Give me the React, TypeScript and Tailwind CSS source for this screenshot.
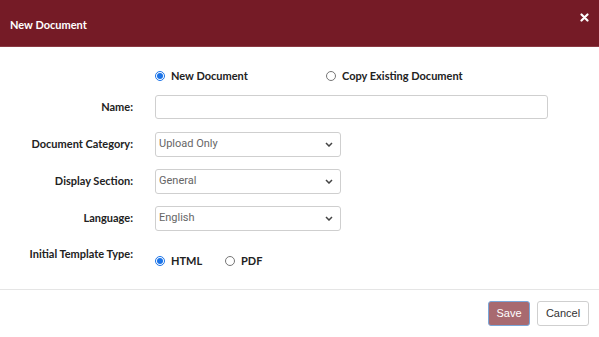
import { ChangeEvent, ReactNode, useState } from 'react'

const labelFont = "font-['Lato','Noto_Sans',sans-serif]"

function Radio({ checked, label, onClick }: { checked: boolean; label: string; onClick: () => void }) {
  return (
    <button type="button" onClick={onClick} className="flex items-center gap-[6px] h-4">
      {checked ? (
        <span className="w-[10px] h-[10px] rounded-full border border-[#1a73e8] bg-white flex items-center justify-center">
          <span className="w-[6px] h-[6px] rounded-full bg-[#1a73e8]" />
        </span>
      ) : (
        <span className="w-[10px] h-[10px] rounded-full border border-[#767676] bg-white" />
      )}
      <span className={`${labelFont} text-[11px] font-bold text-[#222]`}>{label}</span>
    </button>
  )
}

function Select({ value, options, onChange }: { value: string; options: string[]; onChange: (v: string) => void }) {
  return (
    <div className="relative w-[186px] h-[25px]">
      <select
        value={value}
        onChange={(e: ChangeEvent<HTMLSelectElement>) => onChange(e.target.value)}
        className="block appearance-none w-full h-full rounded-[3px] border border-[#cfcfcf] bg-white pl-[3px] pr-6 font-['Roboto',sans-serif] text-[11px] text-[#666] outline-none"
      >
        {options.map(o => <option key={o}>{o}</option>)}
      </select>
      <svg className="pointer-events-none absolute right-[8px] top-[10px]" width="8" height="5" viewBox="0 0 8 5">
        <path d="M1 1l3 3 3-3" fill="none" stroke="#444" strokeWidth="1.5" />
      </svg>
    </div>
  )
}

function Row({ label, children, className = '' }: { label: string; children: ReactNode; className?: string }) {
  return (
    <div className={`flex items-center ${className}`}>
      <div className={`w-[133px] text-right ${labelFont} text-[11px] font-bold text-[#222]`}>{label}</div>
      <div className="ml-[22px] flex">{children}</div>
    </div>
  )
}

export default function App() {
  const [mode, setMode] = useState('new')
  const [name, setName] = useState('')
  const [category, setCategory] = useState('Upload Only')
  const [section, setSection] = useState('General')
  const [language, setLanguage] = useState('English')
  const [template, setTemplate] = useState('html')

  return (
    <div className="w-[599px] h-[337px] bg-white flex flex-col overflow-hidden">
      <div className="h-[47px] bg-[#751b26] border-b border-[#8a3a43] flex items-start justify-between pl-[10px] pr-[10px]">
        <h2 className={`${labelFont} mt-[17px] text-[11px] font-bold text-white`}>New Document</h2>
        <button type="button" className="mt-[12px] w-[10px] h-[10px] flex items-center justify-center">
          <svg width="9" height="9" viewBox="0 0 9 9">
            <path d="M1.5 1.5l6 6M7.5 1.5l-6 6" stroke="white" strokeWidth="2.2" strokeLinecap="round" />
          </svg>
        </button>
      </div>

      <div className="flex-1 flex flex-col">
        <div className="flex items-center ml-[155px] mt-[21px] h-4">
          <div className="w-[171px] flex">
            <Radio checked={mode === 'new'} label="New Document" onClick={() => setMode('new')} />
          </div>
          <Radio checked={mode === 'copy'} label="Copy Existing Document" onClick={() => setMode('copy')} />
        </div>

        <Row label="Name:" className="mt-[11px]">
          <input
            value={name}
            onChange={e => setName(e.target.value)}
            className="block w-[393px] h-[24px] rounded-[3px] border border-[#cfcfcf] bg-white px-[4px] font-['Roboto',sans-serif] text-[11px] outline-none"
          />
        </Row>

        <Row label="Document Category:" className="mt-[13px]">
          <Select value={category} options={['Upload Only', 'Template']} onChange={setCategory} />
        </Row>
        <Row label="Display Section:" className="mt-[12px]">
          <Select value={section} options={['General', 'Other']} onChange={setSection} />
        </Row>
        <Row label="Language:" className="mt-[12px]">
          <Select value={language} options={['English', 'Spanish']} onChange={setLanguage} />
        </Row>

        <div className="flex items-start mt-[15px]">
          <div className={`w-[133px] text-right ${labelFont} text-[11px] font-bold text-[#222] leading-4`}>
            Initial Template Type:
          </div>
          <div className="ml-[22px] mt-[7px] flex items-center">
            <div className="w-[70px] flex">
              <Radio checked={template === 'html'} label="HTML" onClick={() => setTemplate('html')} />
            </div>
            <Radio checked={template === 'pdf'} label="PDF" onClick={() => setTemplate('pdf')} />
          </div>
        </div>

        <div className="mt-[20px] border-t border-[#e5e5e5]" />

        <div className="flex justify-end gap-[7px] pr-[10px] pt-[11px]">
          <button className="h-[25px] w-[42px] rounded-[3px] border border-[#7aa7d9] bg-[#a86a70] font-['Liberation_Sans',Arial,sans-serif] text-[11px] text-white">
            Save
          </button>
          <button className="h-[25px] w-[52px] rounded-[3px] border border-[#cfcfcf] bg-white font-['Liberation_Sans',Arial,sans-serif] text-[11px] text-[#333]">
            Cancel
          </button>
        </div>
      </div>
    </div>
  )
}
